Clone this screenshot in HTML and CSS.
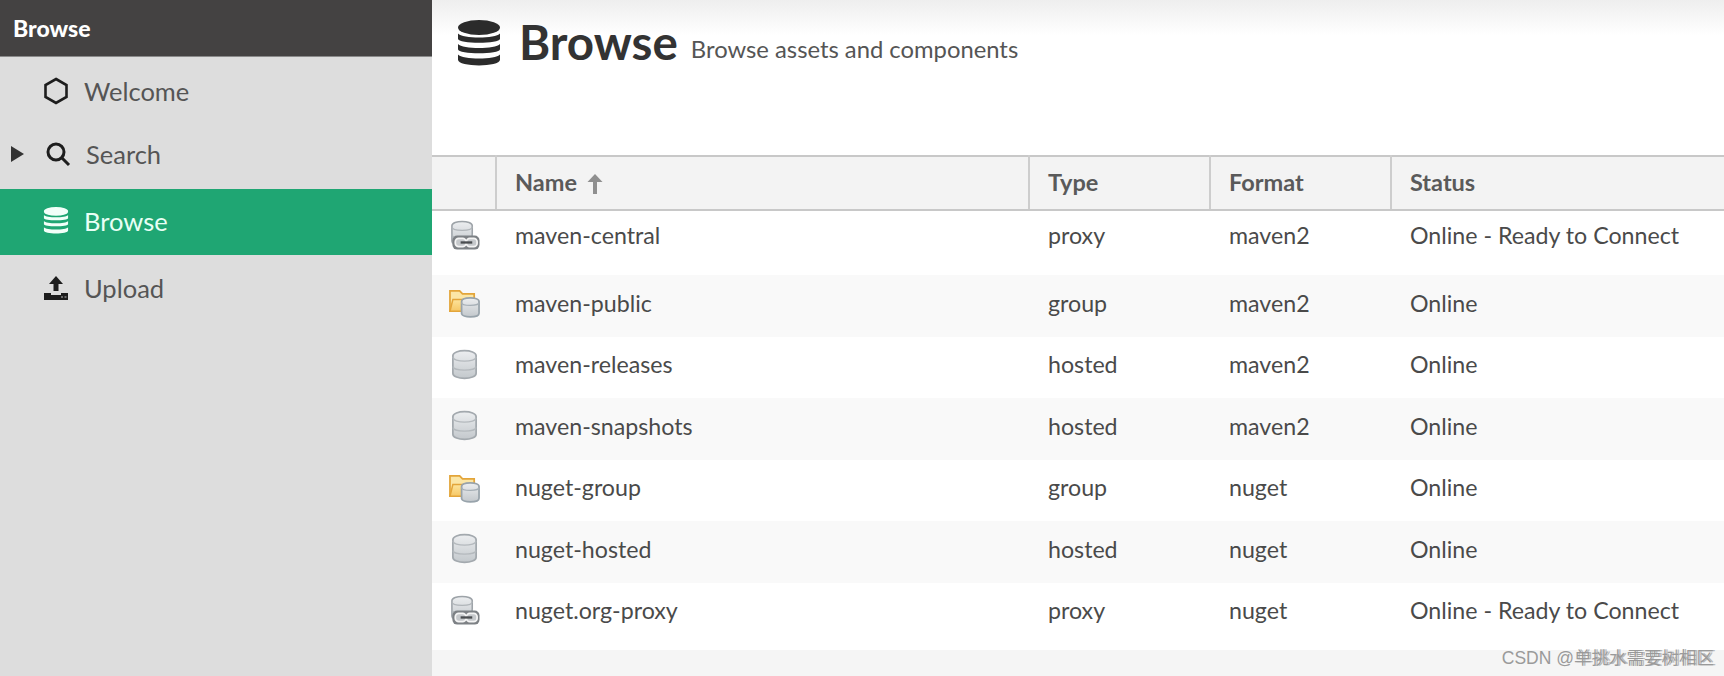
FILE: index.html
```html
<!DOCTYPE html>
<html lang="en">

<head>
    <meta charset="UTF-8">
    <meta name="viewport" content="width=device-width, initial-scale=1.0">
    <title>Browse</title>
    <link rel="stylesheet" href="styles.css">
</head>

<body>
    <svg class="icon-defs" width="0" height="0">
        <defs>
            <linearGradient id="dbFill" x1="0" y1="0" x2="0" y2="1">
                <stop offset="0" stop-color="#eceef0" />
                <stop offset="1" stop-color="#c3c8cc" />
            </linearGradient>
            <linearGradient id="folderFill" x1="0" y1="0" x2="0" y2="1">
                <stop offset="0" stop-color="#fde49b" />
                <stop offset="1" stop-color="#f6c765" />
            </linearGradient>
            <symbol id="db" viewBox="0 0 28 32">
                <path d="M2 7c0-7 24-7 24 0v18c0 7-24 7-24 0z" fill="url(#dbFill)" stroke="#a3a9ae" stroke-width="1.800" />
                <path d="M2 8c0 6 24 6 24 0M2 18c0 5 24 5 24 0" fill="none" stroke="#b4b9bd" stroke-width="1.400" />
            </symbol>
            <symbol id="proxy" viewBox="0 0 32 32">
                <path d="M3 6c0-6 21-6 21 0v16c0 5-21 5-21 0z" fill="url(#dbFill)" stroke="#9da3a8" stroke-width="1.600" />
                <path d="M3 7c0 5 21 5 21 0M3 15c0 5 21 5 21 0" fill="none" stroke="#b0b5b9" stroke-width="1.300" />
                <rect x="3.500" y="16" width="28" height="14.500" rx="5" fill="#7d8185" />
                <rect x="6.500" y="19" width="11" height="8.500" rx="3.500" fill="#c6c9cc" stroke="#f4f4f4" stroke-width="1.800" />
                <rect x="18" y="19" width="11" height="8.500" rx="3.500" fill="#c6c9cc" stroke="#f4f4f4" stroke-width="1.800" />
                <path d="M12 23.200h12" stroke="#4a4d50" stroke-width="2.400" />
            </symbol>
            <symbol id="group" viewBox="0 0 32 32">
                <path d="M1 25V4h10l3 3h12v18z" fill="#fbe6a6" stroke="#e3a53a" stroke-width="1.800" />
                <path d="M1 25l3-12h24l-3 12z" fill="url(#folderFill)" stroke="#e3a53a" stroke-width="1.500" />
                <path d="M13 15c0-5 18-5 18 0v12c0 5-18 5-18 0z" fill="url(#dbFill)" stroke="#98a3ab" stroke-width="1.800" />
                <path d="M13 16c0 4 18 4 18 0" fill="none" stroke="#a6afb6" stroke-width="1.300" />
            </symbol>
            <symbol id="stack" viewBox="0 0 28 32">
                <ellipse cx="14" cy="5" rx="14" ry="5" />
                <path d="M0 9c3 3.500 25 3.500 28 0v3.500c0 3.500-28 3.500-28 0z" />
                <path d="M0 16c3 3.500 25 3.500 28 0v3.500c0 3.500-28 3.500-28 0z" />
                <path d="M0 23c3 3.500 25 3.500 28 0v3.500c0 5-28 5-28 0z" />
            </symbol>
        </defs>
    </svg>

    <div class="app">
        <aside class="sidebar">
            <div class="sidebar-title">Browse</div>
            <nav class="menu">
                <a class="menu-item" href="#">
                    <svg class="menu-icon" viewBox="0 0 26 28" fill="none" stroke="#1d1d1d" stroke-width="2.600">
                        <path d="M13 2l10.500 6v12L13 26 2.500 20V8z" />
                    </svg>
                    Welcome
                </a>
                <a class="menu-item menu-item-search" href="#">
                    <span class="caret"></span>
                    <svg class="menu-icon" viewBox="0 0 26 26" fill="none" stroke="#1d1d1d" stroke-width="3">
                        <circle cx="11" cy="11" r="8" />
                        <path d="M16.500 16.500L24 24" />
                    </svg>
                    Search
                </a>
                <a class="menu-item active" href="#">
                    <svg class="menu-icon" fill="#f2fff9" viewBox="0 0 28 32"><use href="#stack" /></svg>
                    Browse
                </a>
                <a class="menu-item" href="#">
                    <svg class="menu-icon" viewBox="0 0 26 26" fill="#1d1d1d">
                        <path d="M13 1l7 8h-4.500v7h-5V9H6z" />
                        <path d="M1 18h7v2h10v-2h7v7H1z" />
                        <path d="M18 22h2M21.500 22h2" stroke="#bbb" stroke-width="1.200" />
                    </svg>
                    Upload
                </a>
            </nav>
        </aside>

        <main class="content">
            <header class="page-header">
                <svg class="page-icon" viewBox="0 0 28 32" fill="#2b2b2b"><use href="#stack" /></svg>
                <h1>Browse</h1>
                <span class="subtitle">Browse assets and components</span>
            </header>

            <table class="repo-table">
                <colgroup>
                    <col class="col-icon">
                    <col class="col-name">
                    <col class="col-type">
                    <col class="col-format">
                    <col>
                </colgroup>
                <thead>
                    <tr>
                        <th></th>
                        <th>Name
                            <svg class="sort-arrow" viewBox="0 0 16 20" fill="#8f8f8f">
                                <path d="M8 0l7.500 8H10v12H6V8H.5z" />
                            </svg>
                        </th>
                        <th>Type</th>
                        <th>Format</th>
                        <th>Status</th>
                    </tr>
                </thead>
                <tbody>
                    <tr>
                        <td><svg class="repo-icon"><use href="#proxy" /></svg></td>
                        <td>maven-central</td>
                        <td>proxy</td>
                        <td>maven2</td>
                        <td>Online - Ready to Connect</td>
                    </tr>
                    <tr>
                        <td><svg class="repo-icon"><use href="#group" /></svg></td>
                        <td>maven-public</td>
                        <td>group</td>
                        <td>maven2</td>
                        <td>Online</td>
                    </tr>
                    <tr>
                        <td><svg class="repo-icon"><use href="#db" /></svg></td>
                        <td>maven-releases</td>
                        <td>hosted</td>
                        <td>maven2</td>
                        <td>Online</td>
                    </tr>
                    <tr>
                        <td><svg class="repo-icon"><use href="#db" /></svg></td>
                        <td>maven-snapshots</td>
                        <td>hosted</td>
                        <td>maven2</td>
                        <td>Online</td>
                    </tr>
                    <tr>
                        <td><svg class="repo-icon"><use href="#group" /></svg></td>
                        <td>nuget-group</td>
                        <td>group</td>
                        <td>nuget</td>
                        <td>Online</td>
                    </tr>
                    <tr>
                        <td><svg class="repo-icon"><use href="#db" /></svg></td>
                        <td>nuget-hosted</td>
                        <td>hosted</td>
                        <td>nuget</td>
                        <td>Online</td>
                    </tr>
                    <tr>
                        <td><svg class="repo-icon"><use href="#proxy" /></svg></td>
                        <td>nuget.org-proxy</td>
                        <td>proxy</td>
                        <td>nuget</td>
                        <td>Online - Ready to Connect</td>
                    </tr>
                </tbody>
            </table>
        </main>
    </div>

    <div class="watermark">CSDN @<span class="watermark-name">单挑水需要树相区</span></div>
</body>

</html>
```

FILE: styles.css
```css
* {
    margin: 0;
    padding: 0;
    box-sizing: border-box;
}

html,
body {
    height: 100%;
    overflow: hidden;
}

body {
    font-family: Lato, "Noto Sans CJK SC", sans-serif;
    color: #4a4a4a;
    background-color: #f5f5f5;
}

.icon-defs {
    position: absolute;
}

.app {
    display: flex;
    height: 100%;
}

.sidebar {
    width: 432px;
    flex-shrink: 0;
    background-color: #dddddd;
}

.sidebar-title {
    height: 57px;
    padding-left: 13px;
    line-height: 56px;
    font-size: 23px;
    font-weight: 900;
    color: #fff;
    background-color: #444242;
    border-bottom: 1px solid #8a8a8a;
}

.menu-item {
    display: flex;
    align-items: center;
    height: 66px;
    padding: 0 0 0 43px;
    font-size: 25.500px;
    color: #555;
    text-decoration: none;
}

.menu-item:first-child {
    padding-top: 2px;
}

.menu-item-search {
    position: relative;
    padding: 0 0 4px 45px;
}

.caret {
    position: absolute;
    left: 11px;
    top: 23px;
    border-left: 13px solid #333;
    border-top: 8px solid transparent;
    border-bottom: 8px solid transparent;
}

.active {
    color: #e8fff5;
    background-color: #1fa673;
    padding-bottom: 2px;
}

.menu-icon {
    width: 26px;
    height: 28px;
    margin-right: 15px;
    flex-shrink: 0;
}

.page-header {
    display: flex;
    align-items: flex-start;
    height: 155px;
    padding: 20px 0 0 26px;
    background: linear-gradient(#eeeeee, #ffffff 35px);
}

.content {
    flex: 1;
    min-width: 0;
}

.page-icon {
    width: 42px;
    height: 48px;
    margin-right: 19px;
}

.page-header h1 {
    font-size: 47.500px;
    line-height: 44px;
    font-weight: 700;
    color: #333;
}

.subtitle {
    margin: 15px 0 0 13px;
    font-size: 23.800px;
    color: #555;
}

.repo-table {
    width: 100%;
    border-collapse: collapse;
    table-layout: fixed;
}

.col-icon {
    width: 64px;
}

.col-name {
    width: 533px;
}

.col-type,
.col-format {
    width: 181px;
}

.repo-table th {
    height: 54px;
    padding: 0 0 2px 18px;
    text-align: left;
    font-size: 23.500px;
    font-weight: 700;
    color: #5a5a5a;
    background-color: #f3f3f3;
    border-top: 2px solid #c8c8c8;
    border-bottom: 2px solid #c8c8c8;
    border-right: 2px solid #cdcdcd;
}

.repo-table th:last-child {
    border-right: none;
}

.sort-arrow {
    width: 16px;
    height: 20px;
    margin-left: 4px;
    vertical-align: -3px;
}

.repo-table td {
    height: 61.500px;
    padding: 0 0 6px 19px;
    font-size: 23.200px;
    background-color: #fff;
    white-space: nowrap;
}

.repo-table tr:nth-child(even) td {
    background-color: #f9f9f9;
}

.repo-table tr:first-child td {
    height: 65px;
    padding-bottom: 16px;
}

.repo-table tr:last-child td {
    height: 67px;
    padding-bottom: 12px;
}

.repo-table td:first-child {
    padding-left: 17px;
}

.repo-icon {
    display: block;
    width: 31px;
    height: 31px;
}

.watermark {
    position: absolute;
    right: 10px;
    bottom: 7px;
    font-family: "Liberation Sans", "Noto Sans CJK SC", sans-serif;
    font-size: 17.500px;
    color: #9a9a9a;
}

.watermark-name {
    text-shadow: 2px 0 #bbbbbb;
}
```
